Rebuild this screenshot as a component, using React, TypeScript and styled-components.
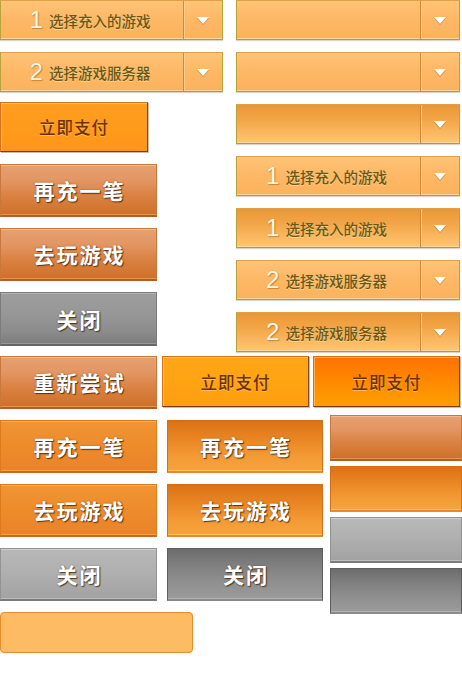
import React from "react";
import styled, { createGlobalStyle, css } from "styled-components";

const Global = createGlobalStyle`
  html, body { margin: 0; padding: 0; background: #ffffff; }
  body { font-family: "Noto Sans CJK SC", "Noto Sans", sans-serif; }
`;

const Page = styled.div`
  width: 462px;
  display: flex;
  flex-direction: column;
`;

const TopArea = styled.div`
  display: flex;
  align-items: flex-start;
  height: 352px;
`;

const Stack = styled.div<{ $w: number; $ml?: number; $pt?: number; $gap?: number }>`
  display: flex;
  flex-direction: column;
  align-items: flex-start;
  flex-shrink: 0;
  width: ${(p) => p.$w}px;
  margin-left: ${(p) => p.$ml ?? 0}px;
  padding-top: ${(p) => p.$pt ?? 0}px;
  gap: ${(p) => p.$gap ?? 0}px;
`;

const Spacer = styled.div<{ $h: number }>`
  height: ${(p) => p.$h}px;
  flex-shrink: 0;
`;

const Row = styled.div<{ $mt: number }>`
  display: flex;
  align-items: flex-start;
  margin-top: ${(p) => p.$mt}px;
`;

/* ---------- Select ---------- */
const SelectBox = styled.div<{ $w: number; $dark?: boolean }>`
  box-sizing: border-box;
  width: ${(p) => p.$w}px;
  height: 40px;
  display: flex;
  border: 1px solid #dfa049;
  border-left-color: #b9a43c;
  border-right-color: #b4a83a;
  border-bottom-color: #92ad2c;
  background: ${(p) =>
    p.$dark
      ? "linear-gradient(#e99736 0%, #f3a648 40%, #fbb862 75%, #ffc576 100%)"
      : "linear-gradient(#ffc475 0%, #fdb867 45%, #fcb25c 100%)"};
  box-shadow: inset 0 -1px 0 #ffd79c, 0 1px 1px rgba(120, 90, 30, 0.25);
`;

const SelectLabel = styled.div`
  flex: 1;
  display: flex;
  align-items: center;
  justify-content: center;
  gap: 6px;
  padding-right: 4px;
`;

const SelectNum = styled.span`
  font-family: "Liberation Sans", "DejaVu Sans", sans-serif;
  font-weight: 300;
  font-size: 24px;
  line-height: 1;
  color: #fff8e4;
  text-shadow: 0 0 1px #d08a30, 1px 1px 1px rgba(150, 90, 20, 0.5);
`;

const SelectText = styled.span`
  font-size: 14.5px;
  font-weight: 500;
  line-height: 1;
  color: #6a5818;
  text-shadow: 0 1px 0 rgba(255, 230, 170, 0.6);
  padding-top: 2px;
`;

const SelectArrow = styled.div`
  width: 38px;
  display: flex;
  align-items: center;
  justify-content: center;
  border-left: 1px solid #d48833;
  box-shadow: inset 1px 0 0 #ffcf90;
  &::after {
    content: "";
    display: block;
    width: 0;
    height: 0;
    border-left: 6.5px solid transparent;
    border-right: 6.5px solid transparent;
    border-top: 7px solid #ffffff;
    filter: drop-shadow(0 1px 0 rgba(140, 80, 10, 0.45));
  }
`;

function Select({ w, dark, num, text }: { w: number; dark?: boolean; num?: string; text?: string }) {
  return (
    <SelectBox $w={w} $dark={dark}>
      <SelectLabel>
        {num && <SelectNum>{num}</SelectNum>}
        {text && <SelectText>{text}</SelectText>}
      </SelectLabel>
      <SelectArrow />
    </SelectBox>
  );
}

/* ---------- Pay button ---------- */
type PayKind = "a" | "b" | "c";
const payBg: Record<PayKind, string> = {
  a: "linear-gradient(#ff9d20, #ff9a1a 60%, #fd951a)",
  b: "linear-gradient(#ffa617, #ffa312 60%, #ff9e10)",
  c: "linear-gradient(#ff7200 0%, #ff8400 40%, #ff9700 80%, #ff9c05 100%)",
};

const PayButton = styled.div<{ $kind: PayKind; $w: number; $h: number; $ml?: number }>`
  box-sizing: border-box;
  flex-shrink: 0;
  width: ${(p) => p.$w}px;
  height: ${(p) => p.$h}px;
  margin-left: ${(p) => p.$ml ?? 0}px;
  display: flex;
  align-items: center;
  justify-content: center;
  background: ${(p) => payBg[p.$kind]};
  border: 1px solid #d7741a;
  border-right-color: #8a4512;
  border-bottom-color: #7a3a0e;
  box-shadow: inset 1px 1px 0 rgba(255, 210, 140, 0.55), 1px 1px 0 rgba(110, 60, 20, 0.35);
  font-size: 16.5px;
  font-weight: 500;
  letter-spacing: 1px;
  color: #6e3000;
  text-shadow: 0 1px 0 rgba(255, 215, 150, 0.6);
`;

/* ---------- Big button ---------- */
type BigKind = "brown" | "orange" | "orangeRev" | "gray" | "grayMid" | "grayDark";

const bigStyles: Record<BigKind, ReturnType<typeof css>> = {
  brown: css`
    background: linear-gradient(#e6a06e 0%, #e39663 30%, #da8344 60%, #cf6f27 100%);
    border: 1px solid #c9783c;
    border-bottom: 2px solid #b05e22;
    box-shadow: inset 0 1px 0 #f2b98c, inset 0 -1px 0 #e3955a;
  `,
  orange: css`
    background: linear-gradient(#f09535 0%, #ee8c2b 45%, #e9832a 100%);
    border: 1px solid #dc7a1c;
    border-bottom: 2px solid #c8691a;
    box-shadow: inset 0 1px 0 #f7b166, inset 0 -1px 0 #f3a24c;
  `,
  orangeRev: css`
    background: linear-gradient(#db7115 0%, #e98523 35%, #f39a35 70%, #f6a43c 100%);
    border: 1px solid #d46f16;
    border-bottom: 2px solid #e88a28;
    box-shadow: inset 0 -1px 0 #fbc06a;
  `,
  gray: css`
    background: linear-gradient(#b8b8b8 0%, #b0b0b0 45%, #a2a2a2 100%);
    border: 1px solid #939393;
    border-bottom: 2px solid #7a7a7a;
    box-shadow: inset 0 1px 0 #cfcfcf, inset 0 -1px 0 #bdbdbd;
  `,
  grayMid: css`
    background: linear-gradient(#9d9d9d 0%, #979797 40%, #8c8c8c 75%, #7c7c7c 100%);
    border: 1px solid #7b7b7b;
    border-bottom: 2px solid #666666;
    box-shadow: inset 0 1px 0 #b3b3b3, inset 0 -1px 0 #999999;
  `,
  grayDark: css`
    background: linear-gradient(#6c6c6c 0%, #7e7e7e 30%, #8f8f8f 65%, #9b9b9b 100%);
    border: 1px solid #5e5e5e;
    border-bottom: 2px solid #8a8a8a;
    box-shadow: inset 0 -1px 0 #b4b4b4;
  `,
};

const BigButton = styled.div<{ $kind: BigKind; $w: number; $h: number }>`
  box-sizing: border-box;
  flex-shrink: 0;
  width: ${(p) => p.$w}px;
  height: ${(p) => p.$h}px;
  display: flex;
  align-items: center;
  justify-content: center;
  padding-left: 2px;
  ${(p) => bigStyles[p.$kind]}
  font-size: 21px;
  font-weight: 700;
  letter-spacing: 2px;
  color: #ffffff;
  text-shadow: 1px 1px 1px rgba(70, 40, 10, 0.85), 0 0 2px rgba(70, 40, 10, 0.4);
`;

const SoftBox = styled.div`
  box-sizing: border-box;
  flex-shrink: 0;
  width: 193px;
  height: 41px;
  border-radius: 4px;
  background: #fdbb63;
  border: 1px solid #e98a2c;
`;

export default function App() {
  return (
    <>
      <Global />
      <Page>
        <TopArea>
          <Stack $w={223}>
            <Select w={223} num="1" text="选择充入的游戏" />
            <Spacer $h={12} />
            <Select w={223} num="2" text="选择游戏服务器" />
            <Spacer $h={10} />
            <PayButton $kind="a" $w={148} $h={50}>立即支付</PayButton>
            <Spacer $h={12} />
            <BigButton $kind="brown" $w={157} $h={53}>再充一笔</BigButton>
            <Spacer $h={11} />
            <BigButton $kind="brown" $w={157} $h={53}>去玩游戏</BigButton>
            <Spacer $h={11} />
            <BigButton $kind="grayMid" $w={157} $h={54}>关闭</BigButton>
          </Stack>
          <Stack $w={224} $ml={13} $gap={12}>
            <Select w={224} />
            <Select w={224} />
            <Select w={224} dark />
            <Select w={224} num="1" text="选择充入的游戏" />
            <Select w={224} dark num="1" text="选择充入的游戏" />
            <Select w={224} num="2" text="选择游戏服务器" />
            <Select w={224} dark num="2" text="选择游戏服务器" />
          </Stack>
        </TopArea>

        <Row $mt={4}>
          <BigButton $kind="brown" $w={157} $h={53}>重新尝试</BigButton>
          <PayButton $kind="b" $w={147} $h={51} $ml={5}>立即支付</PayButton>
          <PayButton $kind="c" $w={147} $h={51} $ml={4}>立即支付</PayButton>
        </Row>

        <Row $mt={6}>
          <Stack $w={157} $pt={5} $gap={11}>
            <BigButton $kind="orange" $w={157} $h={53}>再充一笔</BigButton>
            <BigButton $kind="orange" $w={157} $h={53}>去玩游戏</BigButton>
            <BigButton $kind="gray" $w={157} $h={53}>关闭</BigButton>
            <SoftBox />
          </Stack>
          <Stack $w={156} $ml={10} $pt={5} $gap={11}>
            <BigButton $kind="orangeRev" $w={156} $h={53}>再充一笔</BigButton>
            <BigButton $kind="orangeRev" $w={156} $h={53}>去玩游戏</BigButton>
            <BigButton $kind="grayDark" $w={156} $h={53}>关闭</BigButton>
          </Stack>
          <Stack $w={132} $ml={7} $gap={5}>
            <BigButton $kind="brown" $w={132} $h={46} />
            <BigButton $kind="orangeRev" $w={132} $h={46} />
            <BigButton $kind="gray" $w={132} $h={46} />
            <BigButton $kind="grayDark" $w={132} $h={46} />
          </Stack>
        </Row>
      </Page>
    </>
  );
}
